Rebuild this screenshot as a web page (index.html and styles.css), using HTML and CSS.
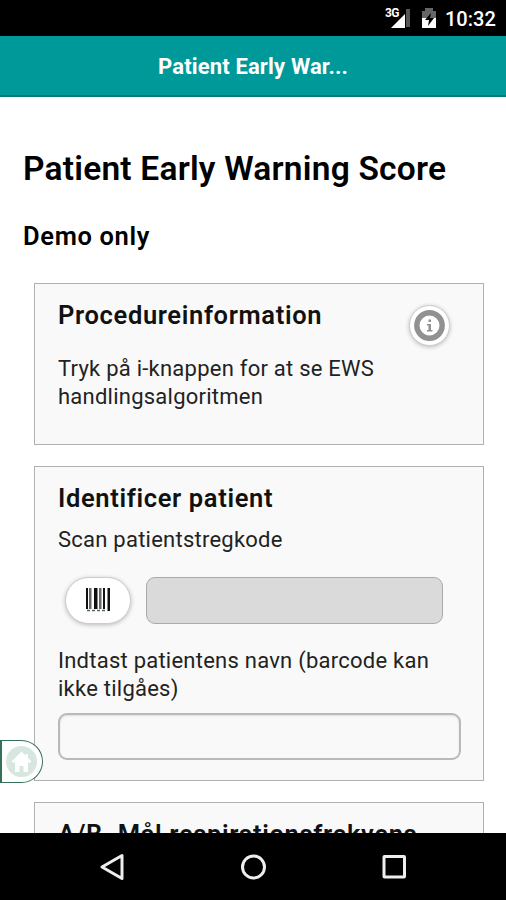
FILE: index.html
```html
<!DOCTYPE html>
<html lang="da">
<head>
<meta charset="utf-8">
<title>Patient Early Warning Score</title>
<link rel="stylesheet" href="styles.css">
</head>
<body>
<div class="screen">
  <div class="status">
    <svg class="signal" width="27" height="24" viewBox="0 0 27 24"><path d="M20 19V1h4v18z" fill="#555"/><path d="M5 20 19 6v14z" fill="#fff"/></svg>
    <span class="network">3G</span>
    <svg class="battery" width="14" height="22" viewBox="0 0 14 22"><path d="M0 3h3V0h8v3h3v8H0z" fill="#666"/><path d="M0 10h14v10H0z" fill="#fff"/><path d="M9 5 3 12h4l-1 6 6-8H8z" fill="#000"/></svg>
    <span class="time">10:32</span>
  </div>
  <header class="bar"><span class="bar-title">Patient Early War...</span></header>
  <main class="content">
    <h1>Patient Early Warning Score</h1>
    <h2>Demo only</h2>
    <section class="card info">
      <h3>Procedureinformation</h3>
      <p>Tryk på i-knappen for at se EWS<br>handlingsalgoritmen</p>
      <button class="info-button" aria-label="Information"><svg width="32" height="32" viewBox="0 0 32 32"><circle cx="15.500" cy="15.500" r="12.700" fill="none" stroke="#919191" stroke-width="5.400"/><path d="M14.500 9.500H17V12h-2.500zM13 14h4v6h1.500v1.500H13V20h1.500v-4.500H13z" fill="#919191"/></svg></button>
    </section>
    <section class="card patient">
      <h3>Identificer patient</h3>
      <p class="scan-label">Scan patientstregkode</p>
      <div class="scan-row">
        <button class="scan" aria-label="Scan"><svg width="24" height="24" viewBox="0 0 24 24"><path d="M0 0h2v21H0zM8 0h3.500v21H8zM17 0h2v21h-2zM21.500 0H24v23h-2.500z" fill="#111"/><path d="M3 0h2.500v21H3zM13 0h2.500v21H13z" fill="#666"/><path d="M1 22.500h19" stroke="#53665f" stroke-width="1.500" stroke-dasharray="3 2"/></svg></button>
        <div class="code-field"></div>
      </div>
      <p class="name-label">Indtast patientens navn (barcode kan<br>ikke tilgåes)</p>
      <input class="name-field" aria-label="Navn">
    </section>
    <section class="card resp"><h3>A/B. Mål respirationsfrekvens</h3></section>
  </main>
  <nav class="nav">
    <svg width="28" height="28" viewBox="0 0 28 28"><path d="M4 14 24 2.500v23z"/></svg>
    <svg width="28" height="28" viewBox="0 0 28 28"><circle cx="14.500" cy="14" r="11"/></svg>
    <svg width="28" height="28" viewBox="0 0 28 28"><rect x="4" y="3.500" width="20.500" height="20.500" rx=".5"/></svg>
  </nav>
  <div class="home"><svg width="32" height="32" viewBox="0 0 32 32"><circle cx="15.500" cy="15.500" r="15.500" fill="#d7e6df"/><path d="M15.500 5.500 6 15v1.500h3V26h4.500v-6h4v6H22v-9.500h3V15l-3-3V8h-2.500v1.500z" fill="#fff"/></svg></div>
</div>
</body>
</html>
```
FILE: styles.css
```css
* { box-sizing: border-box; }
body { margin: 0; font-family: Roboto, "Liberation Sans", sans-serif; color: #111; background: #fff; }
.screen { position: relative; width: 506px; height: 900px; display: flex; flex-direction: column; overflow: hidden; }
.status { position: relative; flex: none; height: 36px; background: #000; color: #fff; display: flex; align-items: flex-start; }
.signal { margin: 8px 0 0 386px; }
.network { position: absolute; left: 385px; top: 7px; font-size: 12px; line-height: 13px; font-weight: 700; letter-spacing: -.7px; }
.battery { margin: 8px 0 0 9px; }
.time { margin: 7px 0 0 9px; font-size: 20px; line-height: 24px; font-weight: 500; white-space: nowrap; }
.bar { flex: none; height: 61px; background: #009999; border-bottom: 2px solid #087779; color: #fff; padding-left: 158px; }
.bar-title { font-size: 22px; line-height: 61px; font-weight: 700; letter-spacing: .15px; white-space: nowrap; }
.content { flex: 1; min-height: 0; overflow: hidden; padding: 52px 22px 0 23px; }
h1, h2, h3, p { margin: 0; white-space: nowrap; }
h1 { font-size: 33.5px; line-height: 40px; font-weight: 600; letter-spacing: .22px; color: #000; }
h2 { margin-top: 33px; padding-bottom: 2px; font-size: 25.5px; line-height: 28px; font-weight: 600; letter-spacing: .65px; color: #000; }
h3 { padding-bottom: 2px; font-size: 25.5px; line-height: 28px; font-weight: 600; letter-spacing: .65px; }
p { font-size: 22px; line-height: 28px; letter-spacing: .24px; color: #222; }
.card { position: relative; margin-left: 11px; width: 450px; border: 1.5px solid #b0b0b0; background: #f9f9f9; padding: 17px 23px 0; }
.info { margin-top: 31px; height: 162px; }
.info p { margin-top: 24px; }
.info-button { position: absolute; left: 374px; top: 21px; width: 41px; height: 41px; padding: 0; border: 1px solid #ccc; border-radius: 50%; background: #fff; box-shadow: 0 1px 4px #bbb; display: flex; align-items: center; justify-content: center; }
.patient { margin-top: 21px; height: 315px; }
.scan-label { margin-top: 12px; }
.scan-row { display: flex; gap: 15px; margin: 23px 0 0 7px; }
.scan { width: 66px; height: 47px; border: 1px solid #ccc; border-radius: 24px; background: #fff; padding: 0; box-shadow: 0 1px 4px #bbb; display: flex; align-items: center; justify-content: center; }
.scan svg { margin-bottom: 2px; }
.code-field { width: 297px; height: 47px; border: 1.5px solid #aaa; border-radius: 9px; background: #dadada; }
.name-label { margin-top: 23px; }
.name-field { display: block; margin-top: 10px; width: 403px; height: 47px; border: 2px solid #b9b9b9; border-radius: 9px; background: #f9f9f9; box-shadow: inset 0 1px 2px #ddd; }
.resp { margin-top: 21px; height: 100px; }
.nav { flex: none; height: 67px; background: #000; display: flex; justify-content: center; align-items: center; gap: 113px; }
.nav svg { fill: none; stroke: #eee; stroke-width: 3; stroke-linejoin: round; }
.home { position: absolute; left: 0; top: 740px; width: 43px; height: 43px; border: 1.5px solid #347158; border-left-width: 2px; border-radius: 0 22px 22px 0; background: #fff; display: flex; align-items: center; padding-left: 4px; }
```
